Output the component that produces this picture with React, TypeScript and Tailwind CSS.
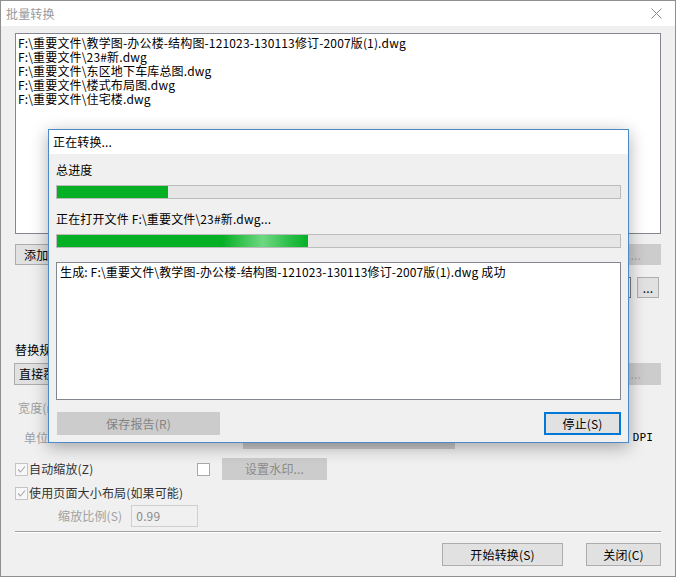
import React from 'react'

const files = [
  'F:\\重要文件\\教学图-办公楼-结构图-121023-130113修订-2007版(1).dwg',
  'F:\\重要文件\\23#新.dwg',
  'F:\\重要文件\\东区地下车库总图.dwg',
  'F:\\重要文件\\楼式布局图.dwg',
  'F:\\重要文件\\住宅楼.dwg',
]

function CheckBox({ checked }: { checked?: boolean }) {
  return (
    <span className="flex h-[13px] w-[13px] shrink-0 items-center justify-center border border-[#c4c4c4] bg-[#f7f7f7]">
      {checked && (
        <svg width="9" height="9" viewBox="0 0 9 9">
          <path d="M1 4.5 L3.4 7 L8 1.5" stroke="#ababab" strokeWidth="1.1" fill="none" />
        </svg>
      )}
    </span>
  )
}

function ProgressDialog() {
  return (
    <div className="absolute left-[47px] top-[128px] w-[581px] border border-[#4a8ac9] bg-[#f0f0f0] shadow-[0_4px_16px_rgba(0,0,0,0.32)]">
      <div className="flex h-[24px] items-center bg-white pl-[4px]">正在转换...</div>
      <div className="px-[7px] pb-[7px]">
        <div className="mt-[8px] h-[16px]">总进度</div>
        <div className="mt-[7px] h-[14px] border border-[#bcbcbc] bg-[#e6e6e6]">
          <div className="h-full w-[111px] bg-[#06b025]" />
        </div>
        <div className="mt-[12px] h-[16px]">正在打开文件 F:\重要文件\23#新.dwg...</div>
        <div className="mt-[7px] h-[14px] border border-[#bcbcbc] bg-[#e6e6e6]">
          <div className="h-full w-[251px] bg-[linear-gradient(90deg,#06b025_0%,#06b025_66%,#6fd882_82%,#2fc04a_92%,#06b025_100%)]" />
        </div>
        <div className="mt-[14px] h-[138px] border border-[#828790] bg-white pl-[3px] pt-[1px]">
          生成: F:\重要文件\教学图-办公楼-结构图-121023-130113修订-2007版(1).dwg 成功
        </div>
        <div className="mt-[12px] flex justify-between">
          <div className="ml-[1px] flex h-[23px] w-[163px] items-center justify-center bg-[#cccccc] text-[#838383]">
            保存报告(R)
          </div>
          <div className="flex h-[23px] w-[77px] items-center justify-center border-2 border-[#0078d7] bg-[#e1e1e1]">
            停止(S)
          </div>
        </div>
      </div>
    </div>
  )
}

export default function App() {
  return (
    <div className="relative h-[577px] w-[676px] overflow-hidden border border-[#8f8f8f] bg-[#f0f0f0] font-['Noto_Sans_CJK_SC',sans-serif] text-[12px] leading-[16px] tracking-[0.15px] text-black">
      <div className="flex h-[25px] items-center justify-between bg-white pl-[5px] pr-[13px]">
        <span className="text-[#9a9a9a]">批量转换</span>
        <svg width="11" height="11" viewBox="0 0 11 11">
          <path d="M0.5 0.5 L10.5 10.5 M10.5 0.5 L0.5 10.5" stroke="#8a8a8a" strokeWidth="1" />
        </svg>
      </div>

      <div className="px-[14px]">
        <div className="mt-[7px] h-[201px] border border-[#828790] bg-white pl-[2px] pt-[2px] leading-[14px]">
          {files.map((f) => (
            <div key={f}>{f}</div>
          ))}
        </div>

        <div className="mt-[10px] flex justify-between">
          <div className="flex h-[21px] w-[80px] items-center border border-[#adadad] bg-[#e1e1e1] pl-[8px]">
            添加...
          </div>
          <div className="flex h-[21px] w-[100px] items-center justify-end bg-[#cccccc] pr-[20px] text-[#a8a8a8]">
            ...
          </div>
        </div>

        <div className="mt-[12px] flex h-[21px]">
          <div className="ml-[120px] h-full flex-1 border border-[#7a7a7a] bg-white" />
          <div className="ml-[6px] mr-[2px] flex h-[21px] w-[22px] items-center justify-center border border-[#adadad] bg-[#e1e1e1]">
            ...
          </div>
        </div>

        <div className="mt-[44px] h-[16px]">替换规则</div>
        <div className="mt-[5px] flex justify-between">
          <div className="-ml-px flex h-[22px] w-[260px] items-center border border-[#adadad] bg-[#e1e1e1] pl-[4px]">
            直接覆盖
          </div>
          <div className="flex h-[22px] w-[100px] items-center justify-end bg-[#cccccc] pr-[20px] text-[#a8a8a8]">
            ...
          </div>
        </div>

        <div className="mt-[15px] h-[16px] pl-[3px] text-[#a0a0a0]">宽度(mm)</div>
        <div className="mt-[11px] flex h-[22px] items-center">
          <span className="pl-[9px] text-[#a0a0a0]">单位</span>
          <div className="ml-[195px] h-[21px] w-[212px] bg-[#c8c8c8]" />
          <span className="ml-auto mr-[8px] font-['DejaVu_Sans_Mono',monospace] text-[11px]">DPI</span>
        </div>

        <div className="mt-[9px] flex h-[22px] items-center">
          <CheckBox checked />
          <span className="ml-[1px] w-[168px] text-[#333]">自动缩放(Z)</span>
          <span className="flex h-[13px] w-[13px] border border-[#a8a8a8] bg-white" />
          <div className="ml-[12px] flex h-[22px] w-[105px] items-center justify-center bg-[#cccccc] text-[#8a8a8a]">
            设置水印...
          </div>
        </div>

        <div className="mt-[5px] flex h-[16px] items-center">
          <CheckBox checked />
          <span className="ml-[1px] text-[#333]">使用页面大小布局(如果可能)</span>
        </div>

        <div className="mt-[4px] flex h-[22px] items-center">
          <span className="ml-[43px] text-[#a0a0a0]">缩放比例(S)</span>
          <div className="ml-[9px] flex h-[22px] w-[67px] items-center border border-[#cfcfcf] bg-[#f0f0f0] pl-[4px] text-[#8a8a8a]">
            0.99
          </div>
        </div>

        <div className="mt-[4px] border-t border-b border-t-[#a0a0a0] border-b-white" />

        <div className="mt-[10px] flex justify-end">
          <div className="flex h-[23px] w-[121px] items-center justify-center border border-[#adadad] bg-[#e1e1e1]">
            开始转换(S)
          </div>
          <div className="ml-[23px] flex h-[23px] w-[75px] items-center justify-center border border-[#adadad] bg-[#e1e1e1]">
            关闭(C)
          </div>
        </div>
      </div>

      <ProgressDialog />
    </div>
  )
}
